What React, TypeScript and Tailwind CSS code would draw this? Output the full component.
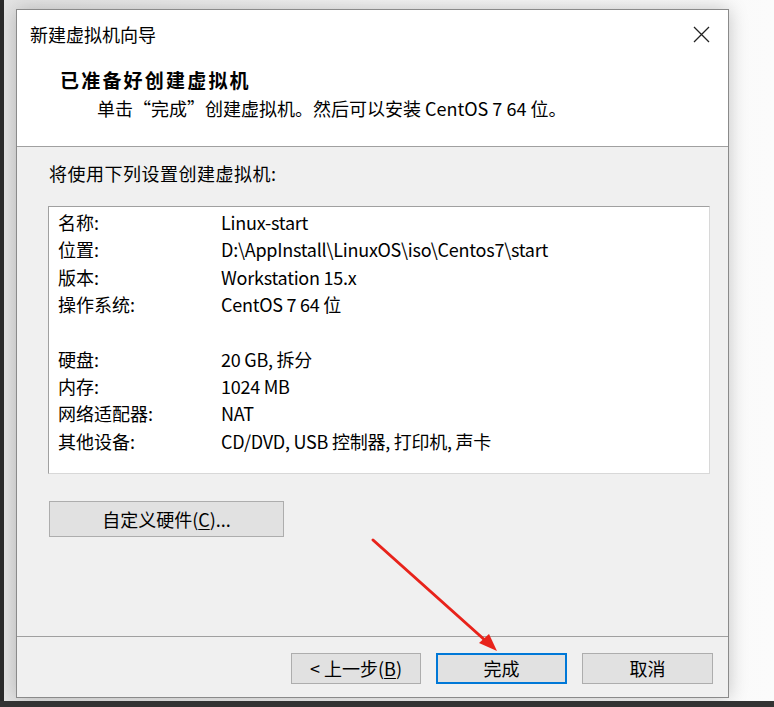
import React from "react";

const FONT = { fontFamily: '"Noto Sans CJK SC", "Noto Sans", sans-serif' };

const rows: Array<[string, string] | null> = [
  ["名称:", "Linux-start"],
  ["位置:", "D:\\AppInstall\\LinuxOS\\iso\\Centos7\\start"],
  ["版本:", "Workstation 15.x"],
  ["操作系统:", "CentOS 7 64 位"],
  null,
  ["硬盘:", "20 GB, 拆分"],
  ["内存:", "1024 MB"],
  ["网络适配器:", "NAT"],
  ["其他设备:", "CD/DVD, USB 控制器, 打印机, 声卡"],
];

function WinButton({ children, primary, className }: { children: React.ReactNode; primary?: boolean; className?: string }) {
  return (
    <button
      className={`flex items-center justify-center bg-[#e1e1e1] text-[18px] text-black ${
        primary ? "border-2 border-[#0078d7]" : "border border-[#adadad]"
      } ${className ?? ""}`}
    >
      {children}
    </button>
  );
}

export default function App() {
  return (
    <div className="relative w-[774px] h-[707px] overflow-hidden bg-[#f7f7f7] flex flex-col" style={FONT}>
      <div className="flex flex-1">
        <div className="w-[4px] bg-[#2b2b2b]" />
        <div className="flex-1 pl-[12px] pt-[9px] bg-gradient-to-r from-[#e4e4e4] via-[#f5f5f5] to-[#fbfbfb]">
          {/* Dialog */}
          <div className="w-[713px] h-[689px] border border-[#8a8a8a] bg-[#f0f0f0] flex flex-col shadow-[0_0_18px_rgba(0,0,0,0.22)]">
            {/* Header */}
            <div className="h-[137px] bg-white border-b border-[#a0a0a0] shrink-0">
              <div className="h-[48px] flex items-center justify-between pl-[13px] pr-[18px]">
                <span className="text-[18px] text-black">新建虚拟机向导</span>
                <svg width="17" height="17" viewBox="0 0 17 17" className="text-[#222]">
                  <path d="M1 1 L16 16 M16 1 L1 16" stroke="currentColor" strokeWidth="1.3" fill="none" />
                </svg>
              </div>
              <div className="mt-[10px] pl-[43px] h-[24px] leading-[24px] text-[19px] font-bold tracking-[2.2px] text-black">
                已准备好创建虚拟机
              </div>
              <div className="mt-[4px] pl-[80px] h-[24px] leading-[24px] text-[18px] text-black">
                单击“完成”创建虚拟机。然后可以安装 CentOS 7 64 位。
              </div>
            </div>

            {/* Body */}
            <div className="flex-1 pl-[31px] pt-[14px]">
              <div className="ml-[1px] h-[24px] leading-[24px] text-[18px] tracking-[0.5px] text-black">
                将使用下列设置创建虚拟机:
              </div>
              <div className="mt-[21px] w-[662px] h-[268px] bg-white border border-[#a0a0a0] border-r-[#d8d8d8] border-b-[#d8d8d8] pl-[9px] pt-[2px]">
                {rows.map((r, i) =>
                  r ? (
                    <div key={i} className="flex h-[27.3px] items-center text-[18px] text-black">
                      <span className="w-[163px] shrink-0">{r[0]}</span>
                      <span className="tracking-[-0.25px]">{r[1]}</span>
                    </div>
                  ) : (
                    <div key={i} className="h-[27.3px]" />
                  )
                )}
              </div>
              <WinButton className="mt-[27px] ml-[1px] w-[235px] h-[36px]">
                自定义硬件(<span className="underline underline-offset-2">C</span>)...
              </WinButton>
            </div>

            {/* Footer */}
            <div className="h-[61px] shrink-0 border-t border-[#a0a0a0] flex items-start justify-end pt-[16px] pr-[15px] gap-[15px]">
              <WinButton className="w-[130px] h-[31px]">
                &lt; 上一步(<span className="underline underline-offset-2">B</span>)
              </WinButton>
              <WinButton primary className="w-[131px] h-[31px]">
                完成
              </WinButton>
              <WinButton className="w-[131px] h-[31px]">取消</WinButton>
            </div>
          </div>
        </div>
      </div>
      <div className="h-[6px] bg-[#333333] shrink-0" />

      {/* Red annotation arrow */}
      <svg className="absolute left-0 top-0 pointer-events-none" width="774" height="707">
        <line x1="373" y1="540" x2="487" y2="642" stroke="#e8231b" strokeWidth="3" strokeLinecap="round" />
        <polygon points="497,651 479,643 489,634" fill="#e8231b" />
      </svg>
    </div>
  );
}
